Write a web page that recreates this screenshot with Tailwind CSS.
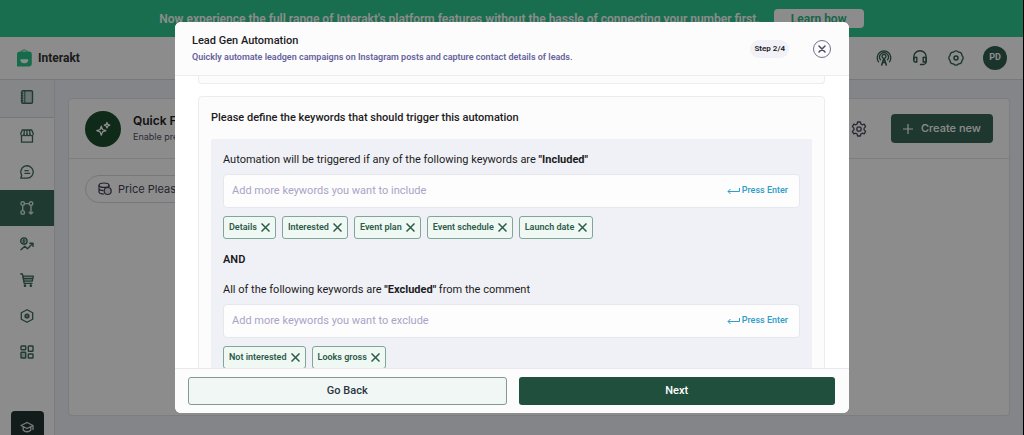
<!DOCTYPE html>
<html class="h-full" lang="en">
    <head>
        <meta charset="UTF-8" />
        <meta name="viewport" content="width=device-width, initial-scale=1.0" />
        <title>Interakt</title>
        <script src="https://cdn.jsdelivr.net/npm/@tailwindcss/browser@4"></script>
    </head>
    <body class="h-full flex flex-col overflow-hidden bg-[#f1f2f8] border-r border-black font-[Roboto,sans-serif] text-[#222]">
        <!-- announcement -->
        <div class="h-[37px] shrink-0 flex items-center justify-center gap-3.5 bg-[#2ec990] text-white">
            <p class="text-[12px] font-semibold whitespace-nowrap">Now experience the full range of Interakt's platform features without the hassle of connecting your number first.</p>
            <button class="h-[19px] w-[90px] rounded-sm bg-white text-[#2bb684] text-[12px] leading-none font-semibold">Learn how</button>
        </div>

        <!-- top bar -->
        <header class="h-[43px] shrink-0 flex items-center justify-between bg-white border-b border-[#d9dbe0] pl-4 pr-4">
            <a href="#" class="flex items-center gap-1.5 text-[12px] font-bold text-[#333]">
                <svg class="w-4 h-[18px]" viewBox="0 0 16 18" fill="none">
                    <path d="M5 3.200C5.200.200 11.300.200 11.500 3.200" stroke="#2bc48c" stroke-width="1" />
                    <path d="M4 2.500h9a2.800 2.800 0 0 1 2.800 2.800V14.500a3 3 0 0 1-3 3H1V5.500a3 3 0 0 1 3-3z" fill="#2bc48c" />
                    <path d="M4.300 10.300h8a4 4 0 0 1-8 0z" fill="#fff" />
                </svg>
                Interakt
            </a>
            <div class="flex items-center gap-5 text-[#2f5c4e]">
                <button aria-label="Live" class="w-4 h-4">
                    <svg viewBox="0 0 16 16" fill="none" stroke="currentColor" stroke-width="1.300" stroke-linecap="round" stroke-linejoin="round">
                        <path d="M2.600 11.800a6.800 6.800 0 1 1 10.800 0M4.500 9.800a4.400 4.400 0 1 1 7 0" />
                        <path d="M6.500 7.800a2 2 0 1 1 3 0" />
                        <path d="M5.700 15L8 8l2.300 7M6.600 12.500h2.800" stroke-width="1.500" />
                    </svg>
                </button>
                <button aria-label="Support" class="w-4 h-4">
                    <svg viewBox="0 0 16 16" fill="none" stroke="currentColor" stroke-width="1.400" stroke-linecap="round" stroke-linejoin="round">
                        <path d="M1.800 9.500V7a6.200 6.200 0 0 1 12.400 0v4.500a3 3 0 0 1-3 3H8.500" />
                        <path d="M1.800 8.500a2.600 2.600 0 0 1 3-1v4.500h-1.500a1.500 1.500 0 0 1-1.500-1.500zM14.200 8.500a2.600 2.600 0 0 0-3-1v4.500h1.500a1.500 1.500 0 0 0 1.500-1.500z" />
                    </svg>
                </button>
                <button aria-label="Settings" class="w-4 h-4">
                    <svg viewBox="0 0 16 16" fill="none" stroke="currentColor" stroke-width="1.300" stroke-linejoin="round">
                        <path d="M13.900 5.560a3 3 0 0 1 0 4.880a3 3 0 0 1-3.460 3.460a3 3 0 0 1-4.880 0a3 3 0 0 1-3.460-3.460a3 3 0 0 1 0-4.880a3 3 0 0 1 3.460-3.460a3 3 0 0 1 4.880 0a3 3 0 0 1 3.460 3.460z" />
                        <circle cx="8" cy="8" r="2" stroke-width="1.500" />
                    </svg>
                </button>
                <button class="w-6 h-6 -ml-px rounded-full bg-[#315f51] text-white text-[9px] font-bold">PD</button>
            </div>
        </header>

        <div class="flex grow min-h-0">
            <!-- sidebar -->
            <nav class="w-[55px] shrink-0 flex flex-col items-center bg-white border-r border-[#dfe0e6] text-[#3d6a5c]">
                <a href="#" aria-label="Contacts" class="w-full h-[38px] pb-1 shrink-0 flex items-center justify-center bg-[#f3f5f8] border-b border-[#d5d7dc]">
                    <svg class="w-3.5 h-3.5" viewBox="0 0 14 14" fill="none" stroke="currentColor" stroke-width="1.400">
                        <rect x="1.800" y=".7" width="10.700" height="12.600" rx="1" fill="#c3d6cf" />
                        <path d="M4.800 1v12" stroke-width="1" />
                        <path d="M.8 3.300h2.400M.8 5.700h2.400M.8 8.200h2.400M.8 10.700h2.400" />
                    </svg>
                </a>
                <a href="#" aria-label="Store" class="w-full h-9 shrink-0 flex items-center justify-center">
                    <svg class="w-3.5 h-3.5" viewBox="0 0 14 14" fill="none" stroke="currentColor" stroke-width="1.300" stroke-linejoin="round">
                        <path d="M2.300 1h9.400l1.600 3.700c0 2.500-3.300 2.500-3.300.300 0 2.200-3 2.200-3 0 0 2.200-3 2.200-3 0 0 2.200-3.300 2.200-3.300-.3z" />
                        <path d="M4 5l.500-4M10 5l-.5-4M7 5V1M1.500 7v6.200h11V7" />
                    </svg>
                </a>
                <a href="#" aria-label="Chats" class="w-full h-9 shrink-0 flex items-center justify-center">
                    <svg class="w-3.5 h-3.5" viewBox="0 0 14 14" fill="none" stroke="currentColor" stroke-width="1.300" stroke-linecap="round" stroke-linejoin="round">
                        <path d="M.8 13.200l.9-3A6.200 6.200 0 1 1 7.200 13.200z" />
                        <path d="M5 5.700h3.200M5 8.400h4.700" />
                    </svg>
                </a>
                <a href="#" aria-label="Automation" class="w-full h-9 shrink-0 flex items-center justify-center bg-[#386a59] text-[#d4e6dd]">
                    <svg class="w-3.5 h-3.5" viewBox="0 0 14 14" fill="none" stroke="currentColor" stroke-width="1.400" stroke-linecap="round" stroke-linejoin="round">
                        <circle cx="2.700" cy="2.600" r="1.800" />
                        <circle cx="2.700" cy="11.400" r="1.800" />
                        <circle cx="11" cy="2.600" r="1.800" />
                        <path d="M2.700 4.400v5.200M4.500 2.600h4.700M11 4.400v8.600M9.200 11.300l1.800 1.800 1.800-1.800" />
                    </svg>
                </a>
                <a href="#" aria-label="Sales" class="w-full h-9 shrink-0 flex items-center justify-center">
                    <svg class="w-3.5 h-3.5" viewBox="0 0 14 14" fill="none" stroke="currentColor" stroke-width="1.400" stroke-linecap="round" stroke-linejoin="round">
                        <circle cx="3.900" cy="4.100" r="3.200" fill="#c3d6cf" />
                        <path d="M4.900 3.200c-1.900-.9-2.600.8-1.100 1 1.600.2.900 1.900-1.100 1M3.800 2.300v3.800" stroke-width=".8" />
                        <path d="M1 12.800l3.800-3.600 2.700 2.500 5.300-5.400M9.800 6.200h3.200v3.200" />
                    </svg>
                </a>
                <a href="#" aria-label="Orders" class="w-full h-9 shrink-0 flex items-center justify-center">
                    <svg class="w-3.5 h-3.5" viewBox="0 0 14 14" fill="none" stroke="currentColor" stroke-width="1.300" stroke-linecap="round" stroke-linejoin="round">
                        <path d="M3 3.200h10.300l-1 4.900H3.800z" fill="#c3d6cf" />
                        <path d="M.7 1h1.800l1.700 9.300h7.900M3.400 5.600h9.200" />
                        <circle cx="5" cy="12.700" r=".7" />
                        <circle cx="10.800" cy="12.700" r=".7" />
                    </svg>
                </a>
                <a href="#" aria-label="Configure" class="w-full h-9 shrink-0 flex items-center justify-center">
                    <svg class="w-3.5 h-3.5" viewBox="0 0 14 14" fill="none" stroke="currentColor" stroke-width="1.300" stroke-linejoin="round">
                        <path d="M7 .7l5.700 3.100v6.400L7 13.300l-5.700-3.100V3.800z" />
                        <circle cx="7" cy="7" r="1.800" fill="#9db8ae" stroke-width="1.600" />
                    </svg>
                </a>
                <a href="#" aria-label="Apps" class="w-full h-9 shrink-0 flex items-center justify-center">
                    <svg class="w-3.5 h-3.5" viewBox="0 0 14 14" fill="none" stroke="currentColor" stroke-width="1.400">
                        <rect x="1" y="1" width="4.700" height="3.700" rx=".6" />
                        <rect x="8.300" y="1" width="4.700" height="5.300" rx=".6" />
                        <rect x="1" y="7.300" width="4.700" height="5.700" rx=".6" fill="#c3d6cf" />
                        <rect x="8.300" y="9" width="4.700" height="4" rx=".6" />
                    </svg>
                </a>
                <a href="#" aria-label="Learn" class="mt-auto w-[33px] h-6 shrink-0 flex items-end justify-center pb-px rounded-t-sm bg-[#223532] text-[#dcdfe0]">
                    <svg class="w-3.5 h-3.5" viewBox="0 0 14 14" fill="none" stroke="currentColor" stroke-width="1.300" stroke-linejoin="round">
                        <path d="M7 2.500l6 3-6 3-6-3zM3.200 7v3c2 2.300 5.600 2.300 7.600 0V7M13 5.500V10" />
                    </svg>
                </a>
            </nav>

            <!-- page content -->
            <main class="grow flex flex-col pt-[18px] px-[13px] pb-[19px]">
                <section class="grow flex flex-col rounded-sm bg-white border border-[#e2e3e8]">
                    <div class="h-[60px] flex items-center gap-3 border-b border-[#e2e3e8] px-4 font-[Inter,sans-serif]">
                        <div class="w-9 h-9 rounded-full bg-[#1d4d2e] text-white flex items-center justify-center">
                            <svg class="w-4 h-4" viewBox="0 0 16 16" fill="none" stroke="currentColor" stroke-width="1.300" stroke-linejoin="round">
                                <path d="M6.300 5.200l1.200 3.300 3.300 1.200-3.300 1.200-1.200 3.300-1.200-3.300-3.300-1.200 3.300-1.200z" />
                                <path d="M12 1.500l.8 1.900 1.900.8-1.900.8-.8 1.900-.8-1.900-1.900-.8 1.900-.8z" />
                            </svg>
                        </div>
                        <div class="grow">
                            <h1 class="text-[12px] leading-4 font-semibold">Quick Flows</h1>
                            <p class="text-[9px] leading-4 text-[#555063]">Enable pre-built flows</p>
                        </div>
                        <button aria-label="Preferences" class="w-4 h-4 mr-3 text-[#4d4963]">
                            <svg viewBox="0 0 16 16" fill="none" stroke="currentColor" stroke-width="1.300" stroke-linejoin="round">
                                <path d="M6.600 1h2.800l.5 2 1.300.8 2-.6 1.400 2.400-1.500 1.500v1.800l1.500 1.500-1.400 2.400-2-.6-1.300.8-.5 2H6.600l-.5-2-1.300-.8-2 .6-1.400-2.400 1.500-1.500V7.100L1.400 5.600l1.400-2.400 2 .6L6.100 3z" />
                                <circle cx="8" cy="8" r="2.200" />
                            </svg>
                        </button>
                        <button class="h-[29px] w-[102px] rounded-sm bg-[#386657] text-white text-[11px] font-medium flex items-center justify-center gap-2">
                            <svg class="w-2.5 h-2.5" viewBox="0 0 10 10" stroke="currentColor" stroke-width="1.200"><path d="M5 0v10M0 5h10" /></svg>
                            Create new
                        </button>
                    </div>
                    <div class="flex px-4 pt-4">
                        <button class="h-7 px-3 rounded-full border border-[#d8d9de] flex items-center gap-1.5 text-[11px] text-[#443f55] font-[Inter,sans-serif]">
                            <svg class="w-3.5 h-3.5" viewBox="0 0 14 14" fill="none" stroke="currentColor" stroke-width="1.200">
                                <ellipse cx="6" cy="3.200" rx="5" ry="2.200" />
                                <path d="M1 3.200v6.600c0 1.300 2.300 2.200 5 2.200M1 6.500C1 7.800 3 8.500 5.500 8.600M11 3.200v2" />
                                <circle cx="9.700" cy="9" r="3.500" fill="#e6e6ec" />
                            </svg>
                            Price Please
                        </button>
                    </div>
                </section>
            </main>
        </div>

        <!-- modal -->
        <div class="fixed inset-0 flex justify-center py-[22px] bg-black/45">
            <div role="dialog" aria-labelledby="modal-title" class="w-[674px] h-full flex flex-col overflow-hidden rounded-md bg-white text-[#1c1b22]">
                <div class="h-[54px] shrink-0 flex items-center justify-between bg-[#fcfcfd] border-b border-[#ececf0] pl-[17px] pr-[18px]">
                    <div>
                        <h2 id="modal-title" class="text-[11px] leading-4 font-medium">Lead Gen Automation</h2>
                        <p class="text-[9px] leading-4 font-semibold text-[#66629c]">Quickly automate leadgen campaigns on Instagram posts and capture contact details of leads.</p>
                    </div>
                    <div class="flex items-center gap-6">
                        <span class="h-[18px] px-1 rounded-full bg-[#f1f1f7] text-[8px] leading-[18px] font-semibold">Step 2/4</span>
                        <button aria-label="Close" class="w-[18px] h-[18px] rounded-full border border-[#73718a] flex items-center justify-center">
                            <svg class="w-2 h-2" viewBox="0 0 8 8" stroke="#4c4a66" stroke-width="1.500" stroke-linecap="round"><path d="M1 1l6 6M7 1L1 7" /></svg>
                        </button>
                    </div>
                </div>

                <div class="grow min-h-0 overflow-hidden pl-[23px] pr-6">
                    <div class="h-2 rounded-b-sm border border-t-0 border-[#ececf0] bg-[#fcfcfd]"></div>

                    <section class="mt-3 rounded-sm border border-[#ececf0] bg-[#fcfcfd] px-3">
                        <h3 class="text-[11px] leading-[42px] font-medium">Please define the keywords that should trigger this automation</h3>
                        <div class="bg-[#f0f1f6] px-3 pt-3 pb-6">
                            <label for="include" class="block text-[11px] leading-[18px] mb-[5px]">Automation will be triggered if any of the following keywords are <b>"Included"</b></label>
                            <div class="h-[34px] flex items-center rounded-sm border border-[#e6e6ec] bg-[#fdfdfd] pl-2 pr-[11px]">
                                <input id="include" type="text" placeholder="Add more keywords you want to include" class="grow text-[11px] placeholder:text-[#a9a3c7] outline-none" />
                                <button class="flex items-center gap-0.5 text-[9px] font-medium text-[#2f9cc9]">
                                    <svg class="w-[13px] h-2" viewBox="0 0 13 8" fill="none" stroke="currentColor"><path d="M12.500 1v3.500H1M3.500 2L1 4.500 3.500 7" /></svg>
                                    Press Enter
                                </button>
                            </div>
                            <ul class="mt-2 flex gap-1.5 text-[9px] font-semibold text-[#2c5b49]">
                                <li class="h-[23px] flex items-center gap-1 rounded-[3px] border border-[#7fa698] bg-[#f0f8f4] px-[5px]">Details
                                    <button aria-label="Remove Details"><svg class="w-[9px] h-[9px]" viewBox="0 0 9 9" stroke="currentColor" stroke-width="1.500"><path d="M.5.5l8 8M8.500.5l-8 8" /></svg></button>
                                </li>
                                <li class="h-[23px] flex items-center gap-1 rounded-[3px] border border-[#7fa698] bg-[#f0f8f4] px-[5px]">Interested
                                    <button aria-label="Remove Interested"><svg class="w-[9px] h-[9px]" viewBox="0 0 9 9" stroke="currentColor" stroke-width="1.500"><path d="M.5.5l8 8M8.500.5l-8 8" /></svg></button>
                                </li>
                                <li class="h-[23px] flex items-center gap-1 rounded-[3px] border border-[#7fa698] bg-[#f0f8f4] px-[5px]">Event plan
                                    <button aria-label="Remove Event plan"><svg class="w-[9px] h-[9px]" viewBox="0 0 9 9" stroke="currentColor" stroke-width="1.500"><path d="M.5.5l8 8M8.500.5l-8 8" /></svg></button>
                                </li>
                                <li class="h-[23px] flex items-center gap-1 rounded-[3px] border border-[#7fa698] bg-[#f0f8f4] px-[5px]">Event schedule
                                    <button aria-label="Remove Event schedule"><svg class="w-[9px] h-[9px]" viewBox="0 0 9 9" stroke="currentColor" stroke-width="1.500"><path d="M.5.5l8 8M8.500.5l-8 8" /></svg></button>
                                </li>
                                <li class="h-[23px] flex items-center gap-1 rounded-[3px] border border-[#7fa698] bg-[#f0f8f4] px-[5px]">Launch date
                                    <button aria-label="Remove Launch date"><svg class="w-[9px] h-[9px]" viewBox="0 0 9 9" stroke="currentColor" stroke-width="1.500"><path d="M.5.5l8 8M8.500.5l-8 8" /></svg></button>
                                </li>
                            </ul>

                            <p class="my-3 text-[11px] leading-[18px] font-semibold">AND</p>

                            <label for="exclude" class="block text-[11px] leading-[18px] mb-[5px]">All of the following keywords are <b>"Excluded"</b> from the comment</label>
                            <div class="h-[34px] flex items-center rounded-sm border border-[#e6e6ec] bg-[#fdfdfd] pl-2 pr-[11px]">
                                <input id="exclude" type="text" placeholder="Add more keywords you want to exclude" class="grow text-[11px] placeholder:text-[#a9a3c7] outline-none" />
                                <button class="flex items-center gap-0.5 text-[9px] font-medium text-[#2f9cc9]">
                                    <svg class="w-[13px] h-2" viewBox="0 0 13 8" fill="none" stroke="currentColor"><path d="M12.500 1v3.500H1M3.500 2L1 4.500 3.500 7" /></svg>
                                    Press Enter
                                </button>
                            </div>
                            <ul class="mt-2 flex gap-1.5 text-[9px] font-semibold text-[#2c5b49]">
                                <li class="h-[23px] flex items-center gap-1 rounded-[3px] border border-[#7fa698] bg-[#f0f8f4] px-[5px]">Not interested
                                    <button aria-label="Remove Not interested"><svg class="w-[9px] h-[9px]" viewBox="0 0 9 9" stroke="currentColor" stroke-width="1.500"><path d="M.5.5l8 8M8.500.5l-8 8" /></svg></button>
                                </li>
                                <li class="h-[23px] flex items-center gap-1 rounded-[3px] border border-[#7fa698] bg-[#f0f8f4] px-[5px]">Looks gross
                                    <button aria-label="Remove Looks gross"><svg class="w-[9px] h-[9px]" viewBox="0 0 9 9" stroke="currentColor" stroke-width="1.500"><path d="M.5.5l8 8M8.500.5l-8 8" /></svg></button>
                                </li>
                            </ul>
                        </div>
                    </section>
                </div>

                <div class="h-[45px] shrink-0 flex items-center gap-3 border-t border-[#e8e8ee] bg-[#fcfcfd] pl-[13px] pr-3.5 text-[11px] font-medium">
                    <button class="grow basis-0 h-7 rounded-[3px] border border-[#7f9b94] bg-[#f0f7f5] text-[#2c3540]">Go Back</button>
                    <button class="grow basis-0 h-7 rounded-[3px] bg-[#204f3e] text-white">Next</button>
                </div>
            </div>
        </div>
    </body>
</html>
